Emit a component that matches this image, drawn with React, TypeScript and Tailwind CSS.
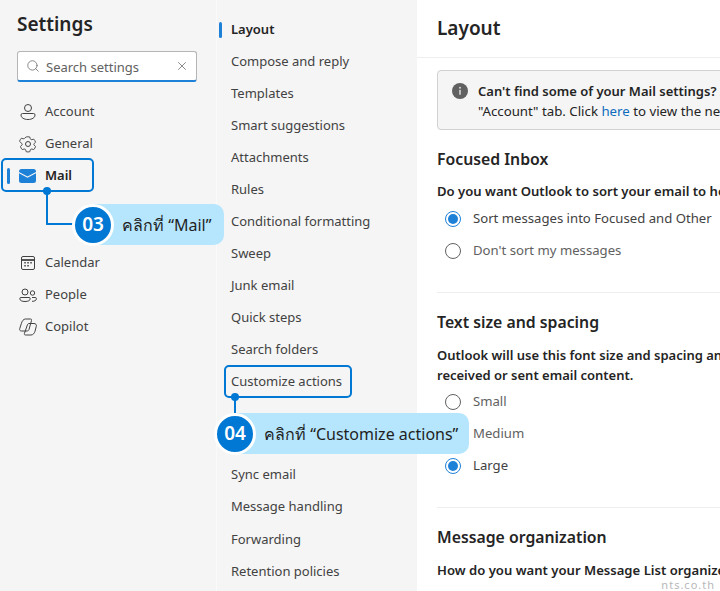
import { Search, X } from 'lucide-react';
import type { ReactNode } from 'react';

const font = { fontFamily: '"Noto Sans", "Open Sans", sans-serif' };

const topNav = [
  { label: 'Account', icon: <AccountIcon /> },
  { label: 'General', icon: <GearIcon /> },
];
const bottomNav = [
  { label: 'Calendar', icon: <CalendarIcon /> },
  { label: 'People', icon: <PeopleIcon /> },
  { label: 'Copilot', icon: <CopilotIcon /> },
];
const midTop = ['Compose and reply', 'Templates', 'Smart suggestions', 'Attachments', 'Rules', 'Conditional formatting', 'Sweep', 'Junk email', 'Quick steps', 'Search folders'];

function AccountIcon() {
  return (
    <svg width="20" height="20" viewBox="0 0 20 20" fill="none" stroke="#424242" strokeWidth="1">
      <circle cx="10" cy="6" r="3.5" />
      <path d="M4.5 11.5h11a1.5 1.5 0 0 1 1.5 1.500c0 2.600-2.800 4.500-7 4.500s-7-1.900-7-4.500a1.500 1.500 0 0 1 1.500-1.500z" />
    </svg>
  );
}

function GearIcon() {
  return (
    <svg width="20" height="20" viewBox="0 0 20 20" fill="none" stroke="#424242" strokeWidth="1" strokeLinejoin="round">
      <circle cx="10" cy="10" r="2.500" />
      <path d="M8 2.200a8.200 8.200 0 0 1 4 0l.6 2.100c.2.700 1 1.100 1.700.9l2.100-.6a8.200 8.200 0 0 1 2 3.500l-1.600 1.400c-.5.500-.5 1.300 0 1.800l1.600 1.400a8.200 8.200 0 0 1-2 3.500l-2.100-.6c-.7-.2-1.500.2-1.700.9l-.6 2.100a8.200 8.200 0 0 1-4 0l-.6-2.100c-.2-.7-1-1.100-1.700-.9l-2.100.6a8.200 8.200 0 0 1-2-3.500l1.600-1.400c.5-.5.5-1.300 0-1.800L.6 7.100a8.200 8.200 0 0 1 2-3.500l2.100.6c.7.200 1.500-.2 1.700-.9z" transform="translate(1 1) scale(.9)" />
    </svg>
  );
}

function MailIcon() {
  return (
    <svg width="17" height="14" viewBox="0 0 17 14">
      <path d="M0 2.500a2.500 2.500 0 0 1 2.500-2.500h12a2.500 2.500 0 0 1 2.500 2.500v.4l-8.500 4.500-8.500-4.500z" fill="#1e81d8" />
      <path d="M0 4.300l8.500 4.500 8.500-4.500v7.200a2.500 2.500 0 0 1-2.500 2.500h-12a2.500 2.500 0 0 1-2.500-2.500z" fill="#1e81d8" />
    </svg>
  );
}

function CalendarIcon() {
  return (
    <svg width="20" height="20" viewBox="0 0 20 20" fill="none" stroke="#424242" strokeWidth="1">
      <rect x="3.500" y="3.500" width="13" height="13" rx="1.500" />
      <path d="M3.500 7h13" strokeWidth="1.800" />
      <g fill="#424242" stroke="none">
        <rect x="6.300" y="9" width="1.500" height="1.500" />
        <rect x="9.300" y="9" width="1.500" height="1.500" />
        <rect x="12.300" y="9" width="1.500" height="1.500" />
        <rect x="6.300" y="12" width="1.500" height="1.500" />
        <rect x="9.300" y="12" width="1.500" height="1.500" />
      </g>
    </svg>
  );
}

function PeopleIcon() {
  return (
    <svg width="20" height="20" viewBox="0 0 20 20" fill="none" stroke="#424242" strokeWidth="1">
      <circle cx="7" cy="7" r="3" />
      <circle cx="14.500" cy="8" r="2.200" />
      <path d="M3 12.500h8a1.200 1.200 0 0 1 1.200 1.200c0 1.800-2 2.800-5.200 2.800s-5.200-1-5.200-2.800A1.200 1.200 0 0 1 3 12.500z" />
      <path d="M14 16.300c2.500.1 4.400-.8 4.400-2.600a1.200 1.200 0 0 0-1.200-1.200h-3.200" />
    </svg>
  );
}

function CopilotIcon() {
  return (
    <svg width="20" height="20" viewBox="0 0 20 20" fill="none" stroke="#424242" strokeWidth="1" strokeLinejoin="round">
      <path d="M7.500 2h5c1 0 1.300.6 1 1.500L11 12.500c-.4 1.100-1.100 1.500-2 1.500H3.500C2 14 1.300 13 1.700 11.700l1.600-5C4 4 5.500 2 7.500 2z" />
      <path d="M11 6.500h5c1.700 0 2.700 1.200 2.300 2.800l-1.300 5c-.6 2-2 3.700-4 3.700H7.500c-1 0-1.400-.6-1.100-1.500L9 9c.4-1.500 1-2.500 2-2.500z" />
    </svg>
  );
}

function InfoDot() {
  return (
    <svg width="16" height="16" viewBox="0 0 16 16" className="mt-[2px] shrink-0">
      <circle cx="8" cy="8" r="8" fill="#616161" />
      <circle cx="8" cy="4.800" r="1" fill="#d6d6d6" />
      <rect x="7.200" y="6.800" width="1.600" height="5" rx=".5" fill="#d6d6d6" />
    </svg>
  );
}

function SideRow({ icon, label }: { icon: ReactNode; label: string }) {
  return (
    <div className="flex h-8 items-center pl-[18px] text-[13px] text-[#424242]">
      <span className="flex w-[27px] shrink-0">{icon}</span>
      {label}
    </div>
  );
}

function Radio({ on, label, dim }: { on?: boolean; label: string; dim?: boolean }) {
  return (
    <div className="flex h-8 items-center whitespace-nowrap pl-[8px]">
      {on ? (
        <span className="flex h-4 w-4 items-center justify-center rounded-full border border-[#1e81d8]">
          <span className="h-[10px] w-[10px] rounded-full bg-[#1e81d8]" />
        </span>
      ) : (
        <span className="h-4 w-4 rounded-full border border-[#616161]" />
      )}
      <span className={`ml-3 text-[13.15px] ${dim ? 'text-[#616161]' : 'text-[#424242]'}`}>{label}</span>
    </div>
  );
}

function Callout({ num, text, className }: { num: string; text: string; className: string }) {
  return (
    <div className={`absolute flex h-[41px] items-center rounded-r-[10px] bg-[#b5e6fd] ${className}`}>
      <span className="absolute -left-[21px] flex h-[42px] w-[42px] items-center justify-center rounded-full border-[3px] border-white bg-[#0078d4] text-[19px] font-semibold text-white">
        {num}
      </span>
      <span className="whitespace-nowrap pl-[29px] pt-[1px] text-[16px] text-[#1f1f1f]">{text}</span>
    </div>
  );
}

export default function App() {
  return (
    <div className="relative flex h-[591px] w-[720px] overflow-hidden bg-white" style={font}>
      <div className="w-[216px] shrink-0 bg-[#f5f5f5]">
        <h1 className="pl-[17px] pt-[9px] text-[19px] font-semibold leading-[30px] text-[#242424]">Settings</h1>
        <div className="ml-[17px] mt-[12px] flex h-[31px] w-[180px] items-center rounded-[3px] border border-[#b5b5b5] border-b-2 border-b-[#1e81d8] bg-white pl-[8px] pr-[7px] text-[#616161]">
          <Search size={14} strokeWidth={1.25} />
          <span className="ml-[6px] flex-1 pt-[3px] text-[13px]">Search settings</span>
          <X size={14} strokeWidth={1.25} />
        </div>
        <div className="mt-[14px]">
          {topNav.map(n => <SideRow key={n.label} {...n} />)}
          <div className="flex h-8 items-center pl-[7px] text-[13px] font-semibold text-[#242424]">
            <span className="h-[16px] w-[3px] rounded-full bg-[#1e81d8]" />
            <span className="ml-[9px] flex w-[26px]"><MailIcon /></span>
            Mail
          </div>
          <div className="h-[55px]" />
          {bottomNav.map(n => <SideRow key={n.label} {...n} />)}
        </div>
      </div>

      <div className="w-[201px] shrink-0 border-l border-[#fafafa] bg-[#f5f5f5] pt-[14px] text-[13px] text-[#424242]">
        <div className="flex h-8 items-center font-semibold text-[#242424]">
          <span className="ml-[2px] h-[16px] w-[3px] rounded-full bg-[#1e81d8]" />
          <span className="ml-[9px]">Layout</span>
        </div>
        {midTop.map(m => <div key={m} className="flex h-8 items-center pl-[14px]">{m}</div>)}
        <div className="flex h-8 items-center pl-[14px]">Customize actions</div>
        <div className="h-[61px]" />
        <div className="flex h-8 items-center pl-[14px]">Sync email</div>
        <div className="flex h-8 items-center pl-[14px]">Message handling</div>
        <div className="mt-px flex h-8 items-center pl-[14px]">Forwarding</div>
        <div className="flex h-8 items-center pl-[14px]">Retention policies</div>
      </div>

      <div className="min-w-0 flex-1 text-[13px]">
        <div className="h-[58px] border-b border-[#eeeeee] pl-[20px] pt-[13px] text-[19px] font-semibold leading-[30px] text-[#242424]">Layout</div>
        <div className="pl-[20px]">
          <div className="mt-[12px] flex h-[60px] w-[400px] rounded-[4px] border border-[#d1d1d1] bg-[#f5f5f5] pl-[14px] pt-[10px]">
            <InfoDot />
            <div className="ml-[10px] whitespace-nowrap leading-[20px] text-[#242424]">
              <div className="font-semibold">Can't find some of your Mail settings? Some settings</div>
              <div className="text-[13.25px]">"Account" tab. Click <span className="text-[#0f6cbd]">here</span> to view the new</div>
            </div>
          </div>
          <h2 className="mt-[17px] text-[15.8px] font-semibold leading-[24px] text-[#242424]">Focused Inbox</h2>
          <p className="mt-[10px] whitespace-nowrap text-[13.1px] font-semibold leading-[20px] text-[#242424]">Do you want Outlook to sort your email to help you focus</p>
          <div className="mt-[2px]">
            <Radio on label="Sort messages into Focused and Other" />
            <Radio dim label="Don't sort my messages" />
          </div>
          <div className="mt-[25px] border-t border-[#eeeeee]" />
          <h2 className="mt-[17px] text-[15.8px] font-semibold leading-[24px] text-[#242424]">Text size and spacing</h2>
          <p className="mt-[11px] whitespace-nowrap font-semibold leading-[20px] text-[#242424]">
            Outlook will use this font size and spacing and<br />received or sent email content.
          </p>
          <div className="mt-[1px]">
            <Radio dim label="Small" />
            <Radio dim label="Medium" />
            <Radio on label="Large" />
          </div>
          <div className="mt-[25px] border-t border-[#eeeeee]" />
          <h2 className="mt-[17px] text-[15.8px] font-semibold leading-[24px] text-[#242424]">Message organization</h2>
          <p className="mt-[11px] whitespace-nowrap text-[13.1px] font-semibold leading-[20px] text-[#242424]">How do you want your Message List organized?</p>
        </div>
      </div>

      {/* overlays */}
      <div className="absolute left-px top-[158px] h-[34px] w-[93px] rounded-[5px] border-2 border-[#0078d4]" />
      <div className="absolute left-[46px] top-[190px] h-[35px] w-[30px] rounded-bl-[1px] border-b-2 border-l-2 border-[#0078d4]" />
      <div className="absolute left-[43px] top-[187px] h-2 w-2 rounded-full bg-[#0078d4]" />
      <Callout num="03" text="คลิกที่ “Mail”" className="left-[93px] top-[204px] w-[131px]" />

      <div className="absolute left-[224px] top-[365px] h-[33px] w-[128px] rounded-[5px] border-2 border-[#0078d4]" />
      <div className="absolute left-[234px] top-[396px] h-[20px] w-[2px] bg-[#0078d4]" />
      <div className="absolute left-[231px] top-[393px] h-2 w-2 rounded-full bg-[#0078d4]" />
      <Callout num="04" text="คลิกที่ “Customize actions”" className="left-[235px] top-[413px] w-[234px]" />

      <div className="absolute bottom-0 right-[5px] text-[11px] leading-[12px] tracking-[1px] text-[#b8b8b8]">nts.co.th</div>
    </div>
  );
}
